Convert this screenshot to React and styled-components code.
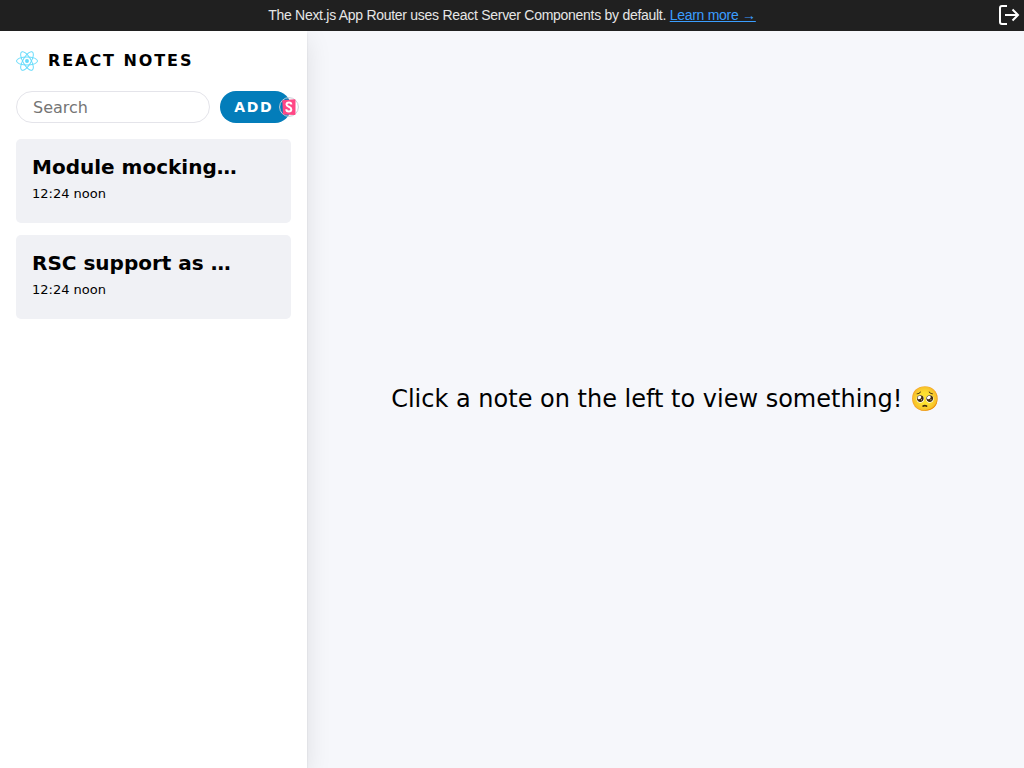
import React from "react";
import styled, { createGlobalStyle } from "styled-components";

const GlobalStyle = createGlobalStyle`
  *, *::before, *::after { box-sizing: border-box; }
  body {
    margin: 0;
    background: #ffffff;
    color: #000000;
    font-family: "DejaVu Sans", sans-serif;
    font-size: 16px;
    line-height: 20px;
  }
`;

const Page = styled.div`
  display: flex;
  flex-direction: column;
  min-height: 100vh;
`;

const Banner = styled.header`
  display: grid;
  grid-template-columns: 1fr auto 1fr;
  align-items: center;
  padding: 3px 2px 4px;
  background: #202020;
  color: #e6e6e6;
  font-family: "Liberation Sans", Arial, sans-serif;
  font-size: 14px;
  line-height: 24px;
  letter-spacing: -0.02em;
`;

const BannerText = styled.p`
  grid-column: 2;
  margin: 0;
`;

const BannerLink = styled.a`
  color: #3b9eff;
  text-decoration: underline;
`;

const SignOutButton = styled.button`
  justify-self: end;
  display: flex;
  padding: 0;
  border: 0;
  background: none;
  color: #ffffff;
  cursor: pointer;
`;

const Main = styled.div`
  display: flex;
  flex: 1;
  overflow: hidden;
`;

const Sidebar = styled.aside`
  position: relative;
  z-index: 1;
  flex: 0 0 30%;
  padding: 16px;
  background: #ffffff;
  box-shadow: 0 8px 24px rgba(0, 0, 0, 0.1), 0 2px 2px rgba(0, 0, 0, 0.1);
`;

const Brand = styled.a`
  display: flex;
  align-items: center;
  gap: 10px;
  height: 28px;
  color: inherit;
  font-weight: 700;
  letter-spacing: 0.12em;
  text-transform: uppercase;
  text-decoration: none;
`;

const Toolbar = styled.div`
  display: flex;
  gap: 10px;
  margin: 16px 0;
`;

const SearchForm = styled.form`
  flex: 1;
  min-width: 0;
`;

const SearchInput = styled.input`
  display: block;
  width: 100%;
  height: 32px;
  padding: 0 16px;
  border: 1px solid #e4e4ea;
  border-radius: 16px;
  background: #ffffff;
  color: inherit;
  font: inherit;
  &::placeholder { color: #757575; }
`;

const AddButton = styled.button`
  position: relative;
  flex: none;
  width: 71px;
  height: 32px;
  padding: 0 14px;
  border: 0;
  border-radius: 16px;
  background: #037dba;
  color: #ffffff;
  font: 700 14px "DejaVu Sans", sans-serif;
  letter-spacing: 0.12em;
  text-align: left;
  cursor: pointer;
`;

const Avatar = styled.svg`
  position: absolute;
  top: 6px;
  right: -8px;
`;

const NoteList = styled.ul`
  display: grid;
  gap: 12px;
  margin: 0;
  padding: 0;
  list-style: none;
`;

const NoteButton = styled.button`
  display: flex;
  flex-direction: column;
  align-items: flex-start;
  gap: 6px;
  width: 100%;
  height: 84px;
  padding: 16px;
  border: 0;
  border-radius: 5px;
  background: #f0f1f5;
  color: inherit;
  font-family: inherit;
  text-align: left;
  cursor: pointer;
`;

const NoteTitle = styled.strong`
  font-size: 20px;
  line-height: 24px;
`;

const NoteTime = styled.small`
  font-size: 13px;
  line-height: 18px;
`;

const Viewer = styled.main`
  flex: 1;
  display: flex;
  align-items: center;
  justify-content: center;
  background: #f6f7fb;
`;

const EmptyText = styled.span`
  font-size: 24px;
  line-height: 29px;
`;

const notes = [
  { title: "Module mocking…", time: "12:24 noon" },
  { title: "RSC support as …", time: "12:24 noon" },
];

function ReactLogo() {
  return (
    <svg width="22" height="20" viewBox="-11.5 -10.232 23 20.463" aria-hidden="true">
      <circle r="2.05" fill="#61dafb" />
      <g stroke="#61dafb" fill="none">
        <ellipse rx="11" ry="4.2" />
        <ellipse rx="11" ry="4.2" transform="rotate(60)" />
        <ellipse rx="11" ry="4.2" transform="rotate(120)" />
      </g>
    </svg>
  );
}

function SignOutIcon() {
  return (
    <svg width="24" height="24" viewBox="0 0 24 24" fill="none" stroke="currentColor" strokeWidth="2" aria-hidden="true">
      <path d="M9 3H4Q2 3 2 5V19Q2 21 4 21H9" />
      <path d="M7 12H20.500M14.500 6.500L20 12L14.500 17.500" />
    </svg>
  );
}

function StorybookAvatar() {
  return (
    <Avatar width="20" height="20" viewBox="0 0 20 20" aria-hidden="true">
      <circle cx="10" cy="10" r="9.400" fill="none" stroke="#c9ced6" />
      <path d="M3.300 3.300L15.500 2.200Q16.500 2.200 16.500 3V17Q16.500 18 15.500 18L4.800 17.500Q4 17.400 3.900 16.500Z" fill="#ff4785" />
      <path d="M12.300 7.500Q12.300 5.500 10 5.500Q7.500 5.500 7.500 7.500C7.500 10.300 12.300 9.300 12.300 12.200Q12.300 14.500 9.900 14.500Q7.300 14.500 7.300 12.200" fill="none" stroke="#ffffff" strokeWidth="2" />
    </Avatar>
  );
}

export default function App() {
  return (
    <Page>
      <GlobalStyle />
      <Banner>
        <BannerText>
          The Next.js App Router uses React Server Components by default.{" "}
          <BannerLink href="#learn">Learn more →</BannerLink>
        </BannerText>
        <SignOutButton type="button" aria-label="Sign out">
          <SignOutIcon />
        </SignOutButton>
      </Banner>
      <Main>
        <Sidebar>
          <Brand href="#home">
            <ReactLogo />
            React Notes
          </Brand>
          <Toolbar>
            <SearchForm role="search">
              <SearchInput type="text" placeholder="Search" aria-label="Search for a note by title" />
            </SearchForm>
            <AddButton type="button">
              ADD
              <StorybookAvatar />
            </AddButton>
          </Toolbar>
          <NoteList>
            {notes.map((note) => (
              <li key={note.title}>
                <NoteButton type="button">
                  <NoteTitle>{note.title}</NoteTitle>
                  <NoteTime>{note.time}</NoteTime>
                </NoteButton>
              </li>
            ))}
          </NoteList>
        </Sidebar>
        <Viewer>
          <EmptyText>Click a note on the left to view something! 🥺</EmptyText>
        </Viewer>
      </Main>
    </Page>
  );
}
